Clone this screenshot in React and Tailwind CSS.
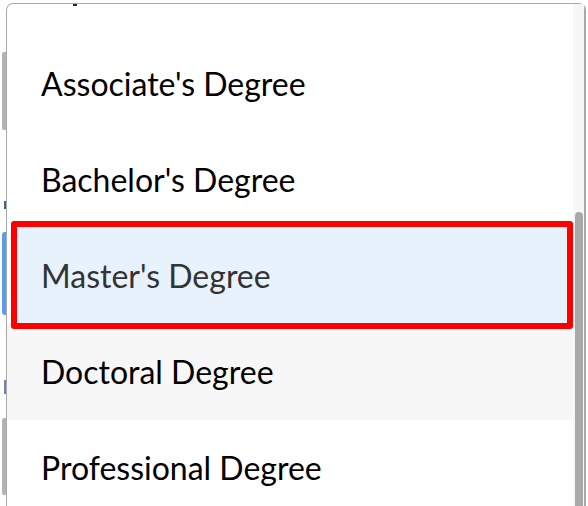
const options = [
  { label: "Associate's Degree" },
  { label: "Bachelor's Degree" },
  { label: "Master's Degree", selected: true },
  { label: "Doctoral Degree", hover: true },
  { label: "Professional Degree" },
];

const App = () => {
  return (
    <div className="flex h-[506px] w-[588px] overflow-hidden bg-white font-['Lato',sans-serif]">
      {/* bits of the page behind the dropdown */}
      <div className="flex w-[6px] shrink-0 flex-col pl-[2px]">
        <div className="mt-[52px] h-[78px] w-[4px] rounded-l-[2px] bg-[#b3b3b3]" />
        <div className="ml-[2px] mt-[71px] h-[8px] w-[2px] bg-[#3f5f8f]" />
        <div className="mt-[23px] h-[83px] w-[4px] rounded-l-[3px] bg-[#5a9cf0]" />
        <div className="ml-[2px] mt-[65px] h-[14px] w-[2px] bg-[#6d86ad]" />
        <div className="mt-[24px] h-[77px] w-[4px] rounded-l-[2px] bg-[#b3b3b3]" />
      </div>

      <div className="relative mt-[3px] flex h-[600px] w-[580px] shrink-0 rounded-t-[7px] border border-r-2 border-[#a9a9a9]">
        <div className="absolute top-0 left-[66px] h-[2px] w-[4px] bg-[#222]" />
        <div className="flex flex-1 flex-col pt-[32px]">
          {options.map((o) => (
            <div
              key={o.label}
              className={
                "relative flex h-[96px] shrink-0 items-center pl-[34px] text-[32px] " +
                (o.hover ? "bg-[#f7f7f7] text-black" : o.selected ? "text-[#333]" : "text-black")
              }
            >
              {o.selected && (
                <div className="absolute -top-[7px] -bottom-[5px] left-[4px] right-0 z-10 rounded-[3px] border-[6px] border-[#ff0000] bg-[#e8f2fd]" />
              )}
              <span className="relative z-20">{o.label}</span>
            </div>
          ))}
        </div>
        <div className="flex w-[11px] shrink-0 justify-center bg-[#f7f7f7] pt-[208px]">
          <div className="h-[400px] w-[8px] rounded-full bg-[#a9a9a9]" />
        </div>
      </div>
    </div>
  );
};

export default App;
